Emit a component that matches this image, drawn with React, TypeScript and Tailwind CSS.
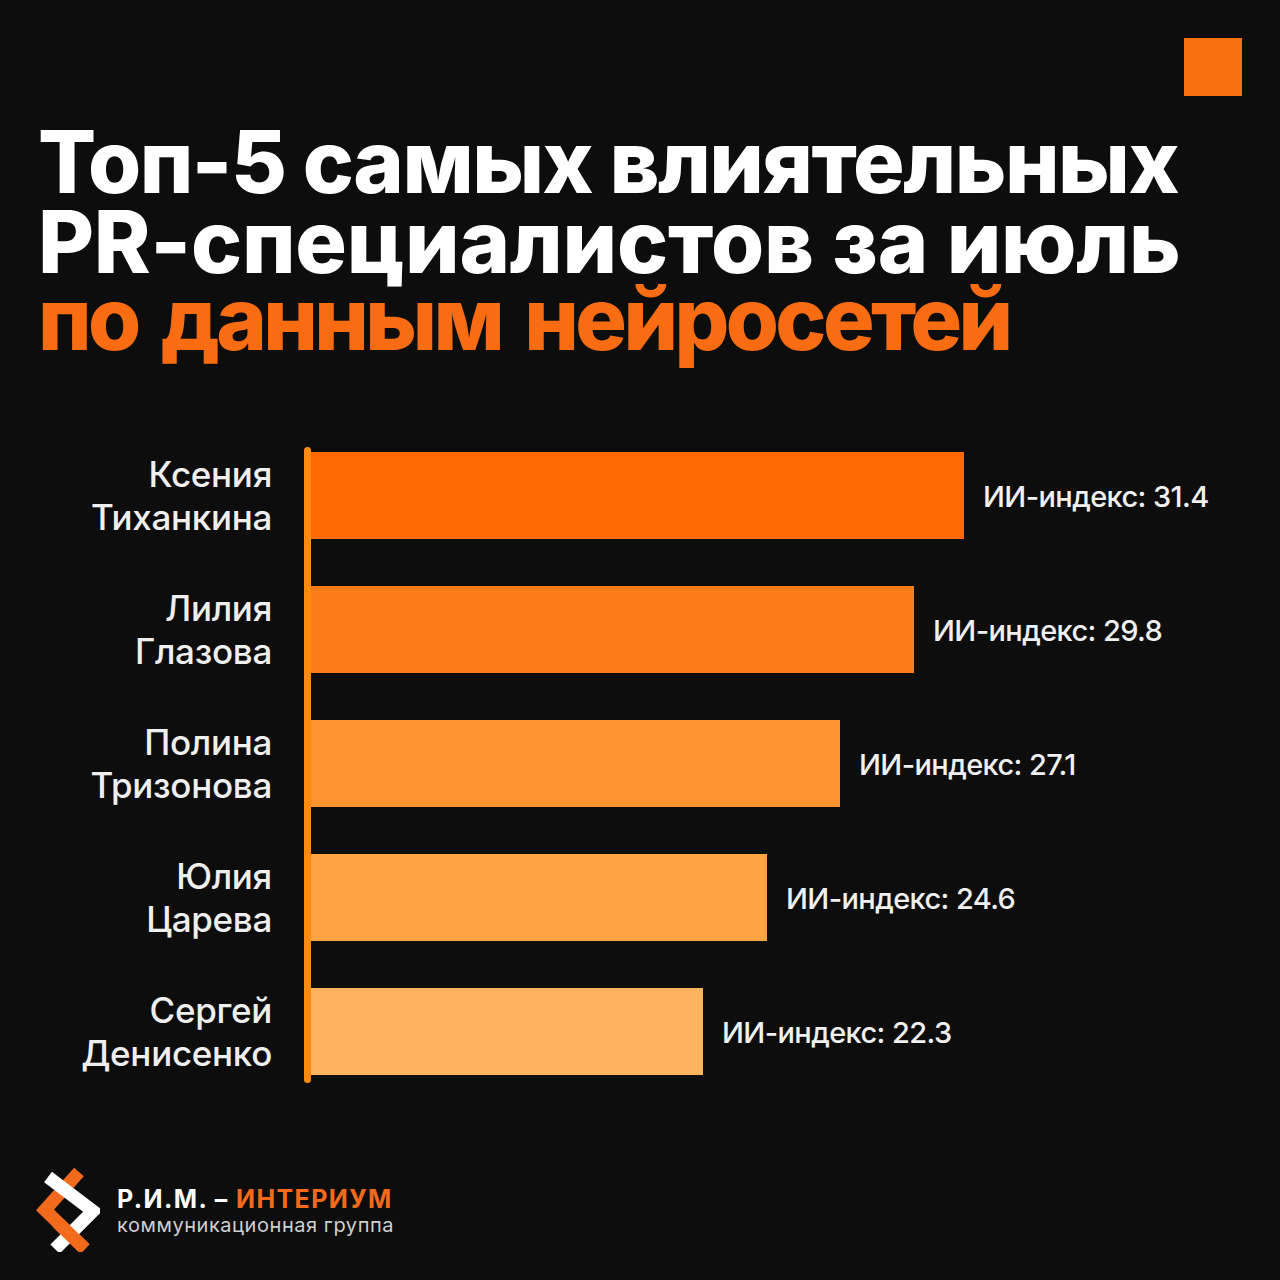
import React from "react";

const rows = [
  { first: "Ксения", last: "Тиханкина", value: "31.4", width: 653, color: "bg-[#ff6a05]" },
  { first: "Лилия", last: "Глазова", value: "29.8", width: 603, color: "bg-[#ff7c1a]" },
  { first: "Полина", last: "Тризонова", value: "27.1", width: 529, color: "bg-[#ff932e]" },
  { first: "Юлия", last: "Царева", value: "24.6", width: 456, color: "bg-[#ffa443]" },
  { first: "Сергей", last: "Денисенко", value: "22.3", width: 392, color: "bg-[#ffb35e]" },
];

function Logo() {
  return (
    <svg width="65" height="85" viewBox="0 0 65 85" className="shrink-0">
      <g strokeLinecap="butt" strokeLinejoin="miter" fill="none" strokeWidth="13">
        <polyline points="44,5 10,43 50,82" stroke="#f26a1b" />
        <polyline points="13,10 58,44 20,82" stroke="#ffffff" />
        <line x1="22" y1="55" x2="50" y2="82" stroke="#f26a1b" />
      </g>
    </svg>
  );
}

export default function App() {
  return (
    <div className="w-[1280px] h-[1280px] bg-[#0d0d0d] flex flex-col font-['Inter',sans-serif] overflow-hidden">
      <div className="flex justify-end pt-[38px] pr-[38px]">
        <div className="w-[58px] h-[58px] bg-[#f9700f]" />
      </div>
      <div className="pl-[38px] mt-[26px] font-extrabold text-[86px] leading-[80px]">
        <div className="text-white tracking-[-1.5px]">Топ-5 самых влиятельных</div>
        <div className="text-white tracking-[-0.2px]">PR-специалистов за июль</div>
        <div className="text-[#f96c12] tracking-[-3.6px] [word-spacing:8px] -mt-[3px]">по данным нейросетей</div>
      </div>

      <div className="flex mt-[88px]">
        <div className="w-[272px] flex flex-col gap-[47px] pt-[5px]">
          {rows.map((r) => (
            <div
              key={r.last}
              className="h-[87px] flex flex-col justify-center items-end text-right text-[35px] leading-[43px] font-medium text-[#efefef] tracking-[-0.3px]"
            >
              <div>{r.first}</div>
              <div>{r.last}</div>
            </div>
          ))}
        </div>
        <div className="w-[32px]" />
        <div className="w-[7px] rounded-full bg-[#ff8a10] h-[636px]" />
        <div className="flex flex-col gap-[47px] pt-[5px]">
          {rows.map((r) => (
            <div key={r.last} className="h-[87px] flex items-center">
              <div className={`h-full ${r.color}`} style={{ width: r.width }} />
              <div className="ml-[19px] pt-[3px] text-[29px] text-[#f0f0f0] font-medium tracking-[-0.6px] whitespace-nowrap">
                ИИ-индекс: {r.value}
              </div>
            </div>
          ))}
        </div>
      </div>

      <div className="flex items-start mt-[84px] pl-[35px]">
        <Logo />
        <div className="ml-[17px] mt-[19px] flex flex-col">
          <div className="text-[25px] leading-[26px] font-bold text-white tracking-[1.4px]">
            Р.И.М. – <span className="text-[#f26a1b]">ИНТЕРИУМ</span>
          </div>
          <div className="text-[20px] leading-[26px] text-[#cfcfcf] tracking-[0.55px]">коммуникационная группа</div>
        </div>
      </div>
    </div>
  );
}
